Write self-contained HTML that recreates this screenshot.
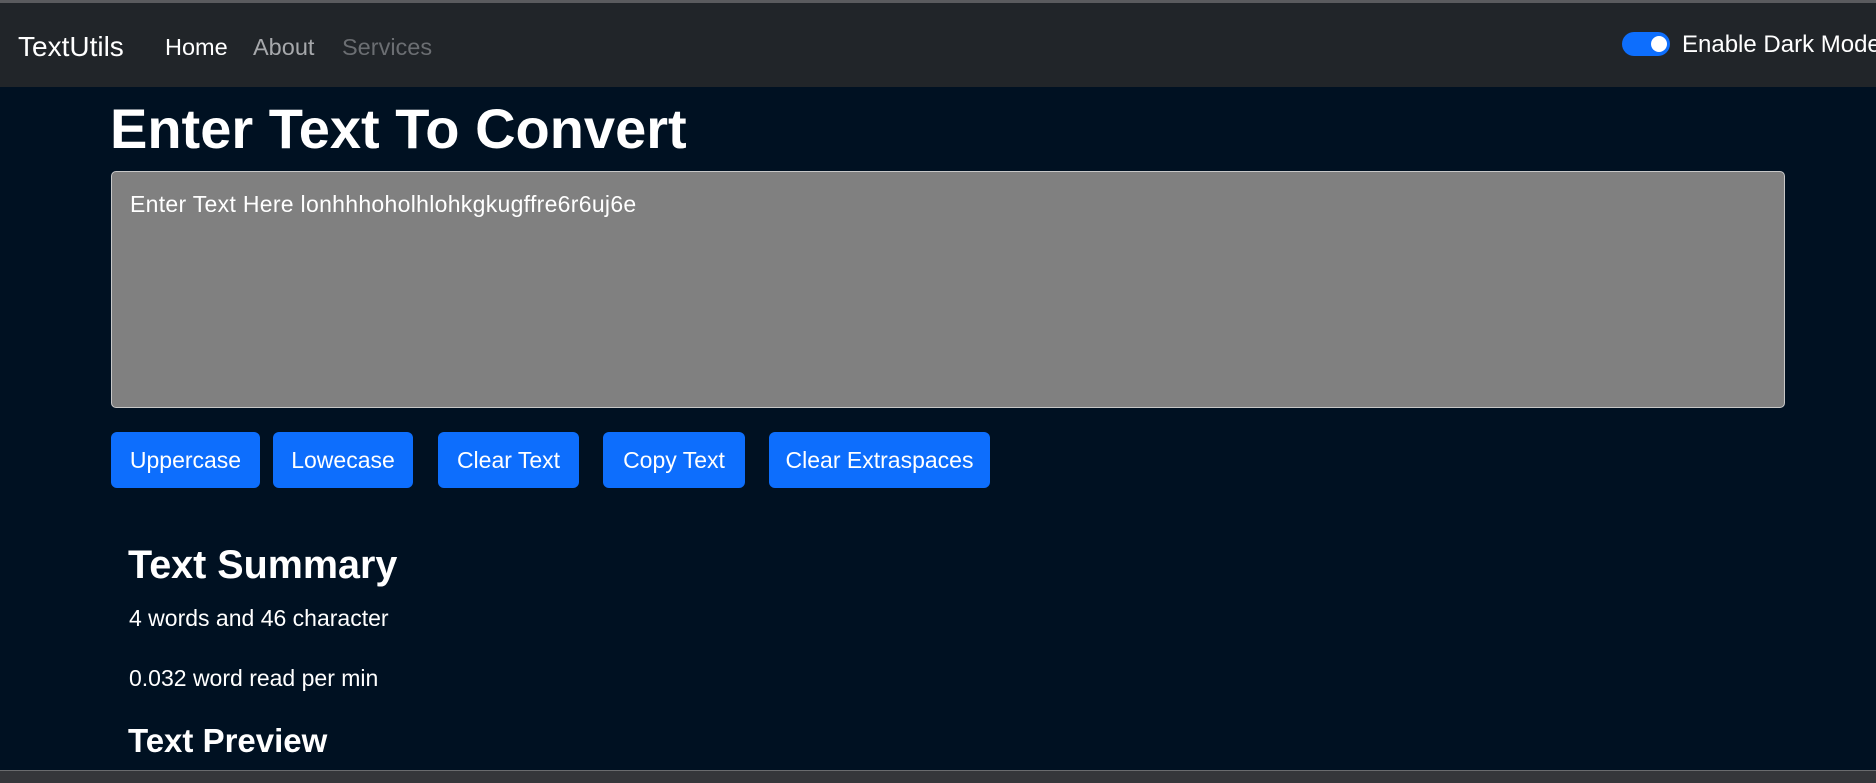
<!DOCTYPE html>
<html><head><style>
*{margin:0;padding:0;box-sizing:border-box}
body{width:1876px;height:783px;overflow:hidden;background:#001122;font-family:"Liberation Sans",sans-serif;color:#fff;position:relative}
.a{position:absolute;white-space:nowrap}
.nav{position:absolute;left:0;top:3px;width:1876px;height:84px;background:#212529;border-top:0}
.btn{position:absolute;top:432px;height:56px;background:#0d6efd;border-radius:6px;font-size:23px;display:flex;align-items:center;justify-content:center}
</style></head><body>
<div class="a" style="left:0;top:0;width:1876px;height:3px;background:#5a5b5e"></div>
<div class="nav"></div>
<div class="a" style="left:18px;top:30px;font-size:28px;line-height:34px">TextUtils</div>
<div class="a" style="left:165px;top:33px;font-size:23.5px;line-height:28px">Home</div>
<div class="a" style="left:253px;top:33px;font-size:23.5px;line-height:28px;color:#a6a8ab">About</div>
<div class="a" style="left:342px;top:33px;font-size:23.5px;line-height:28px;color:#6b6e72">Services</div>
<div class="a" style="left:1622px;top:32px;width:48px;height:24px;border-radius:12px;background:#0d6efd"></div>
<div class="a" style="left:1651px;top:36px;width:16px;height:16px;border-radius:8px;background:#fff"></div>
<div class="a" style="left:1682px;top:30px;font-size:24px;line-height:30px">Enable Dark Mode</div>
<div class="a" style="left:110px;top:96px;font-size:56px;line-height:66px;font-weight:bold">Enter Text To Convert</div>
<div class="a" style="left:111px;top:171px;width:1674px;height:237px;background:#808080;border:1px solid #c8c8c8;border-radius:5px"></div>
<div class="a" style="left:130px;top:190px;font-size:23px;line-height:28px;letter-spacing:0.3px">Enter Text Here lonhhhoholhlohkgkugffre6r6uj6e</div>
<div class="btn" style="left:111px;width:149px">Uppercase</div>
<div class="btn" style="left:273px;width:140px">Lowecase</div>
<div class="btn" style="left:438px;width:141px">Clear Text</div>
<div class="btn" style="left:603px;width:142px">Copy Text</div>
<div class="btn" style="left:769px;width:221px">Clear Extraspaces</div>
<div class="a" style="left:128px;top:542px;font-size:39.5px;line-height:46px;font-weight:bold">Text Summary</div>
<div class="a" style="left:129px;top:604px;font-size:23px;line-height:28px">4 words and 46 character</div>
<div class="a" style="left:129px;top:664px;font-size:23px;line-height:28px">0.032 word read per min</div>
<div class="a" style="left:128px;top:722px;font-size:33px;line-height:38px;font-weight:bold">Text Preview</div>
<div class="a" style="left:0;top:770px;width:1876px;height:13px;background:#35363a;border-top:1px solid #6a6b6e"></div>
</body></html>
